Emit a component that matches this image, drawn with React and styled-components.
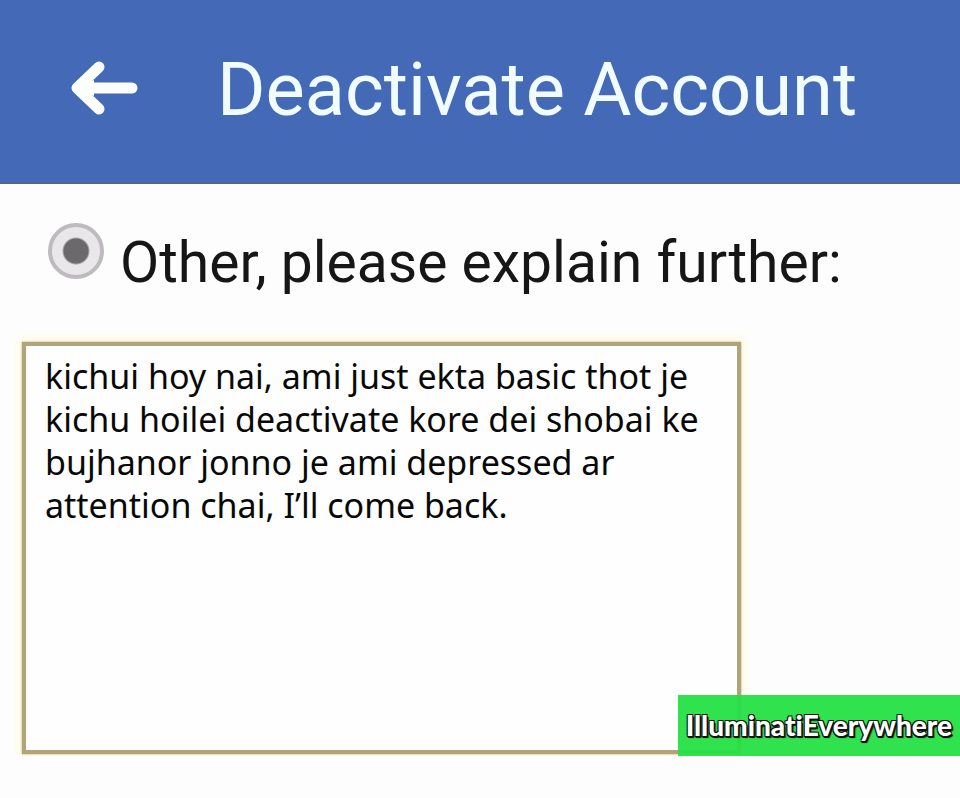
import React from "react";
import styled, { createGlobalStyle } from "styled-components";

const GlobalStyle = createGlobalStyle`
  * { box-sizing: border-box; }
  body { margin: 0; background: #fdfdfd; font-family: Roboto, sans-serif; }
`;

const Page = styled.main`
  display: flex;
  flex-direction: column;
`;

const Header = styled.header`
  display: flex;
  align-items: center;
  gap: 77px;
  padding: 48px 68px 50px;
  background: #4369b7;
  border-bottom: 2px solid #50658f;
`;

const BackButton = styled.button`
  display: flex;
  flex: none;
  padding: 0;
  border: 0;
  background: none;
  color: #fdfffc;
  cursor: pointer;
`;

const Title = styled.h1`
  margin: 0;
  color: #f0fcff;
  font-size: 74px;
  font-weight: 400;
  line-height: 84px;
  white-space: nowrap;
`;

const Form = styled.form`
  display: flex;
  flex-direction: column;
  gap: 36px;
  padding-top: 36px;
`;

const Option = styled.label`
  display: flex;
  align-items: flex-start;
  gap: 16px;
  padding-left: 48px;
  color: #161616;
  font-size: 57px;
  line-height: 86px;
  white-space: nowrap;
`;

const Radio = styled.input`
  appearance: none;
  flex: none;
  width: 56px;
  height: 56px;
  margin: 3px 0 0;
  border: 4px solid #bdbbbd;
  border-radius: 50%;
  background: radial-gradient(circle, #6b696b 0 12px, #e9e7e9 14px);
`;

const Answer = styled.div`
  position: relative;
  display: flex;
  padding: 0 0 2px 22px;
`;

const Explanation = styled.textarea`
  width: 76.6%;
  height: 412px;
  padding: 9px 19px;
  border: 4px solid #b2a47a;
  outline: none;
  resize: none;
  background: #fefefe;
  box-shadow: 0 0 2px #b2a47a, 0 0 8px 4px #fffbe0;
  color: #080808;
  font-family: "Noto Sans", sans-serif;
  font-size: 34px;
  line-height: 43px;
  white-space: pre;
  overflow: hidden;
`;

const Watermark = styled.div`
  position: absolute;
  right: 0;
  bottom: 0;
  padding: 8px;
  background: rgba(36, 224, 68, 0.94);
  color: #fff;
  font-family: Lato, sans-serif;
  font-size: 28px;
  font-weight: 900;
  font-variant-ligatures: none;
  line-height: 45px;
  text-shadow: -1px -1px 0 #111, 1px -1px 0 #111, -1px 1px 0 #111,
    1px 1px 0 #111, 0 2px 0 #111, 2px 2px 1px #111;
`;

const message = [
  "kichui hoy nai, ami just ekta basic thot je",
  "kichu hoilei deactivate kore dei shobai ke",
  "bujhanor jonno je ami depressed ar",
  "attention chai, I’ll come back.",
].join("\n");

function BackArrow() {
  return (
    <svg width="72" height="60" viewBox="0 0 72 60" fill="none" aria-hidden="true">
      <path
        d="M31 7 9 28 31 49M14 28H64"
        stroke="currentColor"
        strokeWidth="11"
        strokeLinecap="round"
        strokeLinejoin="round"
      />
      <path d="M9 28 26 20V36Z" fill="currentColor" />
    </svg>
  );
}

export default function App() {
  return (
    <Page>
      <GlobalStyle />
      <Header>
        <BackButton type="button" aria-label="Back">
          <BackArrow />
        </BackButton>
        <Title>Deactivate Account</Title>
      </Header>
      <Form>
        <Option>
          <Radio type="radio" name="reason" defaultChecked />
          Other, please explain further:
        </Option>
        <Answer>
          <Explanation aria-label="Explanation" spellCheck={false} defaultValue={message} />
          <Watermark>IlluminatiEverywhere</Watermark>
        </Answer>
      </Form>
    </Page>
  );
}
